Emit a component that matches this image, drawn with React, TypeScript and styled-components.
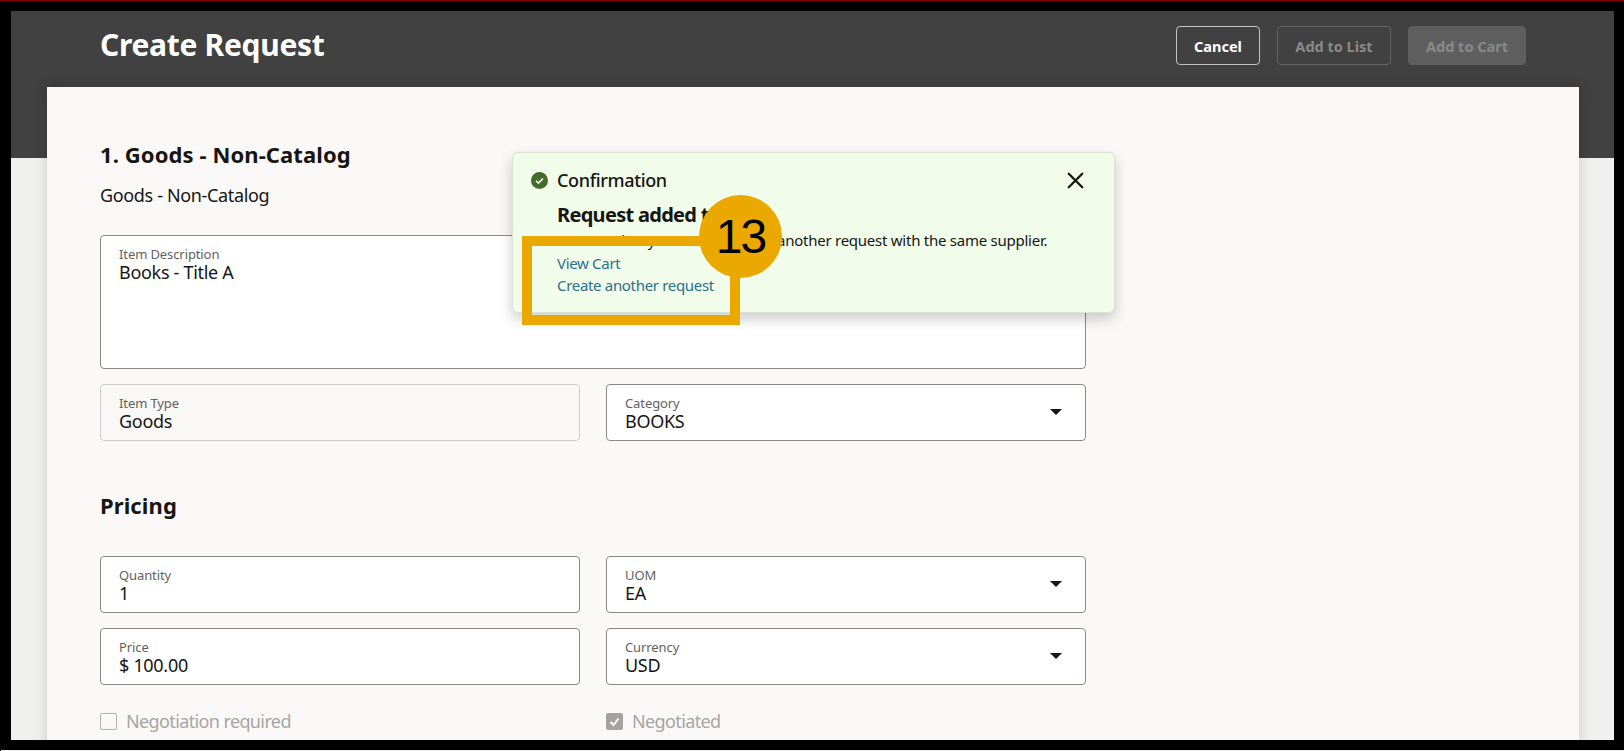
import React from 'react';
import styled, { createGlobalStyle } from 'styled-components';
import { X } from 'lucide-react';

const GlobalStyle = createGlobalStyle`
  html, body {
    margin: 0;
    padding: 0;
    background: #000;
    overflow: hidden;
  }
  * {
    box-sizing: border-box;
  }
`;

const Frame = styled.div`
  width: 1624px;
  height: 751px;
  background: #000;
  border-top: 1px solid #8a0000;
  padding: 10px 10px 0 11px;
  position: relative;
  overflow: hidden;
  font-family: 'Noto Sans', 'Open Sans', sans-serif;
  color: #161513;
`;

const Viewport = styled.div`
  height: 729px;
  background: #f0f0ef;
  overflow: hidden;
`;

const FootStrip = styled.div`
  height: 1px;
  margin: 10px -10px 0 -10px;
  background: #f0f0ef;
`;

const TopBand = styled.header`
  height: 147px;
  background: #414141;
  padding: 15px 88px 0 89px;
  display: flex;
  justify-content: space-between;
  align-items: flex-start;
`;

const PageTitle = styled.h1`
  margin: 0;
  color: #fff;
  font-size: 30px;
  line-height: 38px;
  font-weight: 700;
  letter-spacing: -0.3px;
`;

const Actions = styled.div`
  display: flex;
  gap: 17px;
`;

const Button = styled.button<{ $variant: 'outline' | 'muted' | 'solid' }>`
  height: 39px;
  width: ${(p) => (p.$variant === 'outline' ? '84px' : p.$variant === 'muted' ? '114px' : '118px')};
  border-radius: 4px;
  font-family: inherit;
  font-size: 14.5px;
  font-weight: 700;
  padding: 0;
  color: ${(p) => (p.$variant === 'outline' ? '#fff' : '#8a8a8a')};
  background: ${(p) => (p.$variant === 'solid' ? '#5f5f5f' : 'transparent')};
  border: 1px solid
    ${(p) => (p.$variant === 'outline' ? '#c4c4c4' : p.$variant === 'muted' ? '#646464' : '#5f5f5f')};
`;

const Card = styled.main`
  margin: -71px 35px 0 36px;
  height: 660px;
  background: #fbf9f8;
  padding: 52px 53px 0;
  box-shadow: 0 0 12px rgba(0, 0, 0, 0.16);
`;

const SectionTitle = styled.h2<{ $gap: number }>`
  margin: 0 0 ${(p) => p.$gap}px;
  font-size: 22px;
  line-height: 30px;
  font-weight: 700;
  letter-spacing: 0.1px;
`;

const SubTitle = styled.p`
  margin: 0 0 28px;
  font-size: 18px;
  line-height: 24px;
  letter-spacing: -0.35px;
`;

const FormGrid = styled.div<{ $after: number }>`
  width: 986px;
  display: grid;
  grid-template-columns: 480px 480px;
  column-gap: 26px;
  row-gap: 15px;
  margin-bottom: ${(p) => p.$after}px;
`;

const Field = styled.div<{ $wide?: boolean; $readonly?: boolean }>`
  grid-column: ${(p) => (p.$wide ? '1 / -1' : 'auto')};
  height: ${(p) => (p.$wide ? '134px' : '57px')};
  padding: 10px 17px 0 18px;
  position: relative;
  border-radius: 4px;
  background: ${(p) => (p.$readonly ? '#f9f8f6' : '#fff')};
  border: 1px solid ${(p) => (p.$readonly ? '#cfcdca' : '#8b8986')};
`;

const FieldLabel = styled.div`
  font-size: 13px;
  line-height: 16px;
  color: #655f5c;
  letter-spacing: -0.1px;
`;

const FieldValue = styled.div`
  font-size: 18px;
  line-height: 21px;
  letter-spacing: -0.3px;
`;

const Caret = styled.span`
  position: absolute;
  right: 23px;
  top: 24px;
  width: 0;
  height: 0;
  border-left: 6px solid transparent;
  border-right: 6px solid transparent;
  border-top: 6px solid #161513;
`;

const CheckRow = styled.div`
  margin-top: 11px;
  display: flex;
  align-items: center;
  gap: 9px;
  height: 20px;
  color: #a7a5a2;
  font-size: 18px;
  letter-spacing: -0.62px;
`;

const CheckBox = styled.span<{ $checked?: boolean }>`
  width: 17px;
  height: 17px;
  border-radius: 2px;
  border: 1px solid ${(p) => (p.$checked ? '#a5a3a0' : '#b3b1ae')};
  background: ${(p) => (p.$checked ? '#a5a3a0' : 'transparent')};
  display: flex;
  align-items: center;
  justify-content: center;
`;

const Toast = styled.section`
  position: absolute;
  left: 512px;
  top: 151px;
  width: 603px;
  height: 161px;
  background: #f2fcea;
  border: 1px solid #d9e3d2;
  border-radius: 6px;
  box-shadow: 0 6px 14px rgba(0, 0, 0, 0.2);
  padding: 14px 18px 0 18px;
`;

const ToastHead = styled.div`
  display: flex;
  align-items: center;
  gap: 9px;
  height: 26px;
  font-size: 18px;
  font-weight: 500;
  letter-spacing: -0.35px;
`;

const CloseIcon = styled(X)`
  margin-left: auto;
  margin-right: 7px;
`;

const ToastBody = styled.div`
  padding: 9px 0 0 26px;
`;

const ToastTitle = styled.div`
  font-size: 20px;
  line-height: 26px;
  font-weight: 700;
  letter-spacing: -0.7px;
`;

const ToastText = styled.div`
  margin-top: 2px;
  font-size: 15px;
  line-height: 20px;
  letter-spacing: -0.25px;
`;

const ToastLink = styled.a`
  display: block;
  color: #2b6f8f;
  font-size: 15px;
  line-height: 22px;
  letter-spacing: -0.32px;
`;

const Links = styled.div`
  margin-top: 2px;
`;

const Highlight = styled.div`
  position: absolute;
  left: 522px;
  top: 235px;
  width: 218px;
  height: 89px;
  border: 10px solid #eaa800;
`;

const Badge = styled.div`
  position: absolute;
  left: 699px;
  top: 194px;
  width: 83px;
  height: 83px;
  border-radius: 50%;
  background: #eaa800;
  color: #000;
  font-family: 'Liberation Sans', Arial, sans-serif;
  font-size: 48px;
  letter-spacing: -2px;
  display: flex;
  align-items: center;
  justify-content: center;
`;

const SuccessIcon = () => (
  <svg width="17" height="17" viewBox="0 0 17 17">
    <circle cx="8.5" cy="8.5" r="8.5" fill="#436b2a" />
    <path d="M5 8.8l2.4 2.3L12 6.4" fill="none" stroke="#fff" strokeWidth="1.5" />
  </svg>
);

const TickIcon = () => (
  <svg width="13" height="13" viewBox="0 0 13 13">
    <path d="M2.5 7l3 3 5-6.5" fill="none" stroke="#fff" strokeWidth="2" />
  </svg>
);

const App: React.FC = () => {
  return (
    <Frame>
      <GlobalStyle />
      <Viewport>
        <TopBand>
          <PageTitle>Create Request</PageTitle>
          <Actions>
            <Button $variant="outline">Cancel</Button>
            <Button $variant="muted">Add to List</Button>
            <Button $variant="solid">Add to Cart</Button>
          </Actions>
        </TopBand>
        <Card>
          <SectionTitle $gap={14}>1. Goods - Non-Catalog</SectionTitle>
          <SubTitle>Goods - Non-Catalog</SubTitle>
          <FormGrid $after={49}>
            <Field $wide>
              <FieldLabel>Item Description</FieldLabel>
              <FieldValue>Books - Title A</FieldValue>
            </Field>
            <Field $readonly>
              <FieldLabel>Item Type</FieldLabel>
              <FieldValue>Goods</FieldValue>
            </Field>
            <Field>
              <FieldLabel>Category</FieldLabel>
              <FieldValue>BOOKS</FieldValue>
              <Caret />
            </Field>
          </FormGrid>
          <SectionTitle $gap={36}>Pricing</SectionTitle>
          <FormGrid $after={26}>
            <Field>
              <FieldLabel>Quantity</FieldLabel>
              <FieldValue>1</FieldValue>
            </Field>
            <Field>
              <FieldLabel>UOM</FieldLabel>
              <FieldValue>EA</FieldValue>
              <Caret />
            </Field>
            <Field>
              <FieldLabel>Price</FieldLabel>
              <FieldValue>$ 100.00</FieldValue>
            </Field>
            <Field>
              <FieldLabel>Currency</FieldLabel>
              <FieldValue>USD</FieldValue>
              <Caret />
            </Field>
            <CheckRow>
              <CheckBox />
              Negotiation required
            </CheckRow>
            <CheckRow>
              <CheckBox $checked>
                <TickIcon />
              </CheckBox>
              Negotiated
            </CheckRow>
          </FormGrid>
        </Card>
      </Viewport>
      <FootStrip />
      <Toast>
        <ToastHead>
          <SuccessIcon />
          Confirmation
          <CloseIcon size={27} strokeWidth={2} color="#161513" />
        </ToastHead>
        <ToastBody>
          <ToastTitle>Request added to cart</ToastTitle>
          <ToastText>You can view your cart or create another request with the same supplier.</ToastText>
          <Links>
            <ToastLink>View Cart</ToastLink>
            <ToastLink>Create another request</ToastLink>
          </Links>
        </ToastBody>
      </Toast>
      <Highlight />
      <Badge>13</Badge>
    </Frame>
  );
};

export default App;
